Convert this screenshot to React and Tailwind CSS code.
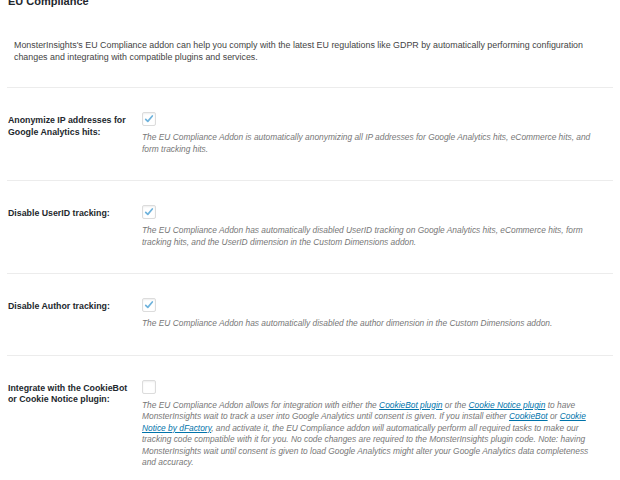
function CheckBox({ checked }) {
  return (
    <div className="w-[14px] h-[14px] border border-[#dcdcdc] rounded-[2px] bg-white shadow-[inset_0_1px_2px_rgba(0,0,0,0.07)] flex items-center justify-center">
      {checked && (
        <svg viewBox="0 0 20 20" className="w-[12px] h-[12px]">
          <path d="M4.5 10.5 L8 14 L15.5 5" fill="none" stroke="#6fb3dc" strokeWidth="2.8" strokeLinecap="round" strokeLinejoin="round" />
        </svg>
      )}
    </div>
  )
}

function Row({ label, checked, children }) {
  return (
    <div className="border-t border-[#ececec] mx-[7px] flex pt-[24px] pb-[25px]">
      <div className="w-[135px] shrink-0 pl-[1px] pt-[3px] text-[8.8px] leading-[11.5px] font-bold text-[#23282d]">
        {label}
      </div>
      <div className="w-[460px]">
        <CheckBox checked={checked} />
        <p className="mt-[6px] text-[8.4px] leading-[11.5px] italic text-[#777]">{children}</p>
      </div>
    </div>
  )
}

const link = "text-[#0073aa] underline"

export default function App() {
  return (
    <div className="w-[620px] h-[480px] overflow-hidden bg-white font-['Liberation_Sans',Arial,sans-serif]">
      <h2 className="-mt-[5px] pl-2 text-[11px] leading-[13px] font-bold text-[#23282d]">EU Compliance</h2>

      <p className="mt-[32px] pl-[14px] pr-[12px] text-[8.9px] leading-[11.5px] text-[#444]">
        MonsterInsights's EU Compliance addon can help you comply with the latest EU regulations like GDPR by automatically performing configuration changes and integrating with compatible plugins and services.
      </p>

      <div className="mt-[24px]">
        <Row label={<>Anonymize IP addresses for<br />Google Analytics hits:</>} checked>
          The EU Compliance Addon is automatically anonymizing all IP addresses for Google Analytics hits, eCommerce hits, and form tracking hits.
        </Row>
        <Row label="Disable UserID tracking:" checked>
          The EU Compliance Addon has automatically disabled UserID tracking on Google Analytics hits, eCommerce hits, form tracking hits, and the UserID dimension in the Custom Dimensions addon.
        </Row>
        <Row label="Disable Author tracking:" checked>
          The EU Compliance Addon has automatically disabled the author dimension in the Custom Dimensions addon.
        </Row>
        <Row label={<>Integrate with the CookieBot<br />or Cookie Notice plugin:</>}>
          The EU Compliance Addon allows for integration with either the <a href="#" className={link}>CookieBot plugin</a> or the <a href="#" className={link}>Cookie Notice plugin</a> to have MonsterInsights wait to track a user into Google Analytics until consent is given. If you install either <a href="#" className={link}>CookieBot</a> or <a href="#" className={link}>Cookie Notice by dFactory</a>, and activate it, the EU Compliance addon will automatically perform all required tasks to make our tracking code compatible with it for you. No code changes are required to the MonsterInsights plugin code. Note: having MonsterInsights wait until consent is given to load Google Analytics might alter your Google Analytics data completeness and accuracy.
        </Row>
      </div>
    </div>
  )
}
